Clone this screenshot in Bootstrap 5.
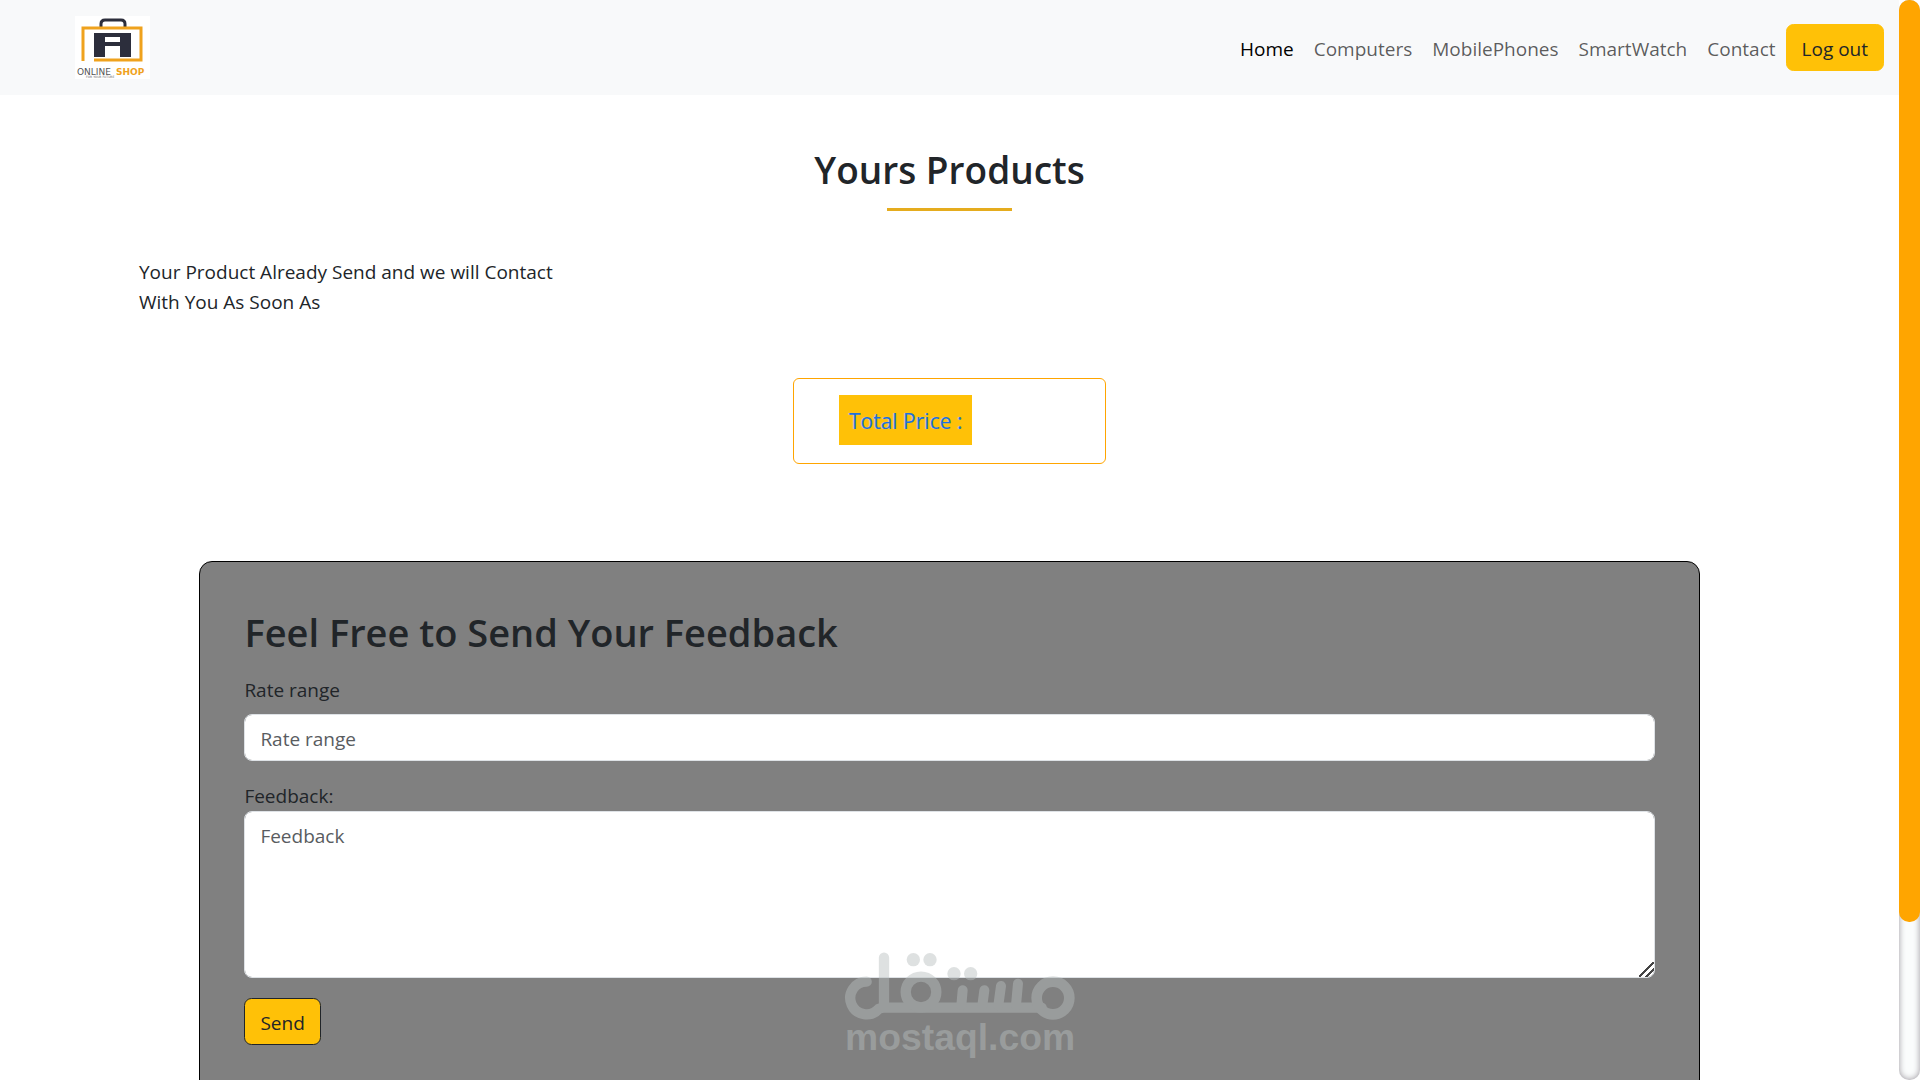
<!DOCTYPE html>
<html lang="en">
<head>
<meta charset="utf-8">
<meta name="viewport" content="width=device-width, initial-scale=1">
<title>Online Shop</title>
<link href="https://cdn.jsdelivr.net/npm/bootstrap@5.3.0/dist/css/bootstrap.min.css" rel="stylesheet">
<style>
  html { font-size: 20px; }
  body {
    --bs-body-font-family: "Open Sans", "Noto Sans", sans-serif;
    --bs-body-font-size: 19px;
    line-height: 30px;
    color: #212529;
    background: #fff;
  }
  .shop-nav { background: #f8f9fa; height: 95px; padding: 0 15px 0 75px; }
  .shop-logo { width: 75px; height: 63px; }
  .shop-nav .nav-link { padding: 9px 10px 7px; font-size: 19px; color: rgba(0,0,0,.65); }
  .shop-nav .nav-link.active { color: #000; }
  .btn { font-size: 19px; line-height: 31px; padding: 9px 15px 5px; --bs-btn-color: #212529; }
  .shop-title { font-size: 37px; line-height: 48px; font-weight: 600; margin: 0; }
  .feedback-title { font-size: 38px; }
  .page-head { padding-top: 51px; }
  .title-rule { width: 125px; height: 3px; margin-top: 14px; background: #e5ac1e; }
  .order-note { width: 440px; margin: 46px 0 61px 139px; }
  .price-box { width: 313px; height: 86px; margin-bottom: 97px; border: 1px solid orange; border-radius: 6px; padding: 16px 45px; }
  .price-tag { font-size: 21px; line-height: 34px; padding: 9px 10px 7px; color: #1f70d8; text-shadow: -1px 0 1px #d5cdbb; background: #ffc107; }
  .feedback-panel { width: 79%; background: gray; border: 1px solid #000; border-radius: 13px; padding: 46px 44px 60px; }
  .feedback-panel .form-control { font-size: 19px; line-height: 31px; padding: 9px 15px 5px; border-color: #dee2e6; border-radius: 8px; margin-bottom: 20px; }
  .feedback-panel .form-control::placeholder { color: #595c5f; }
  .feedback-panel textarea.form-control { height: 167px; }
  .feedback-panel textarea::-webkit-resizer {
    background: linear-gradient(135deg, transparent 45%, #444 45%, #444 54%, transparent 54%, transparent 68%, #444 68%, #444 77%, transparent 77%);
  }
  .rate-label { margin: 19px 0 9px; }
  .btn-send { --bs-btn-border-color: #212529; }
  .scroll-track { width: 21px; border-radius: 10px; background: #fafcfc; box-shadow: inset 0 0 6px #9a959c; }
  .scroll-thumb { height: 85.4%; border-radius: 10px; background: orange; }
  .site-mark { width: 230px; bottom: 21px; left: 50%; transform: translateX(-50%); opacity: .45; pointer-events: none; overflow: visible; }
</style>
</head>
<body class="vh-100 overflow-hidden d-flex position-relative">
<div class="flex-grow-1 overflow-hidden">
  <nav class="shop-nav d-flex align-items-center justify-content-between">
    <a href="#" aria-label="Online Shop">
      <svg class="shop-logo d-block" viewBox="0 0 75 63">
        <rect width="75" height="63" fill="#fff"/>
        <path d="M26 11V8q0-4 4-4h16q4 0 4 4v3" fill="none" stroke="#2c2e3c" stroke-width="3"/>
        <path d="M8 45V12h58v32H19" fill="none" stroke="#efa21d" stroke-width="3"/>
        <path d="M19 17h37v24H45v-11H30v11H19zM30 21v5h15v-5z" fill="#2c2e3c" fill-rule="evenodd"/>
        <text x="2" y="59" font-family="DejaVu Sans, sans-serif" font-size="9" fill="#555">ONLINE</text>
        <text x="41" y="59" font-family="DejaVu Sans, sans-serif" font-size="9" font-weight="bold" fill="#efa21d">SHOP</text>
        <text x="11" y="62" font-family="DejaVu Sans, sans-serif" font-size="3" fill="#666">FOR YOUR FUTURE</text>
      </svg>
    </a>
    <div class="d-flex align-items-center">
      <ul class="nav flex-nowrap">
        <li class="nav-item"><a class="nav-link active" aria-current="page" href="#">Home</a></li>
        <li class="nav-item"><a class="nav-link" href="#">Computers</a></li>
        <li class="nav-item"><a class="nav-link" href="#">MobilePhones</a></li>
        <li class="nav-item"><a class="nav-link" href="#">SmartWatch</a></li>
        <li class="nav-item"><a class="nav-link" href="#">Contact</a></li>
      </ul>
      <button type="button" class="btn btn-warning">Log out</button>
    </div>
  </nav>

  <main class="page-head">
    <h2 class="shop-title text-center">Yours Products</h2>
    <div class="title-rule mx-auto"></div>
    <p class="order-note">Your Product Already Send and we will Contact With You As Soon As</p>
    <div class="price-box mx-auto d-flex align-items-start"><span class="price-tag text-nowrap">Total Price :</span></div>

    <form class="feedback-panel mx-auto">
      <h2 class="shop-title feedback-title">Feel Free to Send Your Feedback</h2>
      <label for="rate" class="rate-label d-block">Rate range</label>
      <input id="rate" type="text" class="form-control" placeholder="Rate range">
      <label for="feedback" class="d-block">Feedback:</label>
      <textarea id="feedback" class="form-control" placeholder="Feedback"></textarea>
      <button type="button" class="btn btn-warning btn-send">Send</button>
    </form>
  </main>
</div>
<div class="scroll-track flex-shrink-0"><div class="scroll-thumb"></div></div>

<svg class="site-mark position-absolute" viewBox="75 65 690 320" role="img" aria-label="mostaql.com">
  <g fill="none" stroke="#b8bebe" stroke-linecap="round">
    <path d="M140 154a49 49 0 1 0 36 82q8-4 16-4H665M192 82V232" stroke-width="31"/>
    <circle cx="699" cy="203" r="49" stroke-width="32"/>
    <circle cx="303" cy="185" r="46" stroke-width="31"/>
    <path d="M428 180L424 225M493 180L487 225M543 167L535 225M594 160L588 225" stroke-width="30"/>
  </g>
  <g fill="#b8bebe">
    <circle cx="280" cy="88" r="20"/><circle cx="330" cy="88" r="20"/>
    <circle cx="402" cy="130" r="20"/><circle cx="452" cy="130" r="20"/>
    <text x="75" y="360" font-family="Liberation Sans, sans-serif" font-weight="bold" font-size="112">mostaql.com</text>
  </g>
</svg>
<script src="https://cdn.jsdelivr.net/npm/bootstrap@5.3.0/dist/js/bootstrap.bundle.min.js"></script>
</body>
</html>
